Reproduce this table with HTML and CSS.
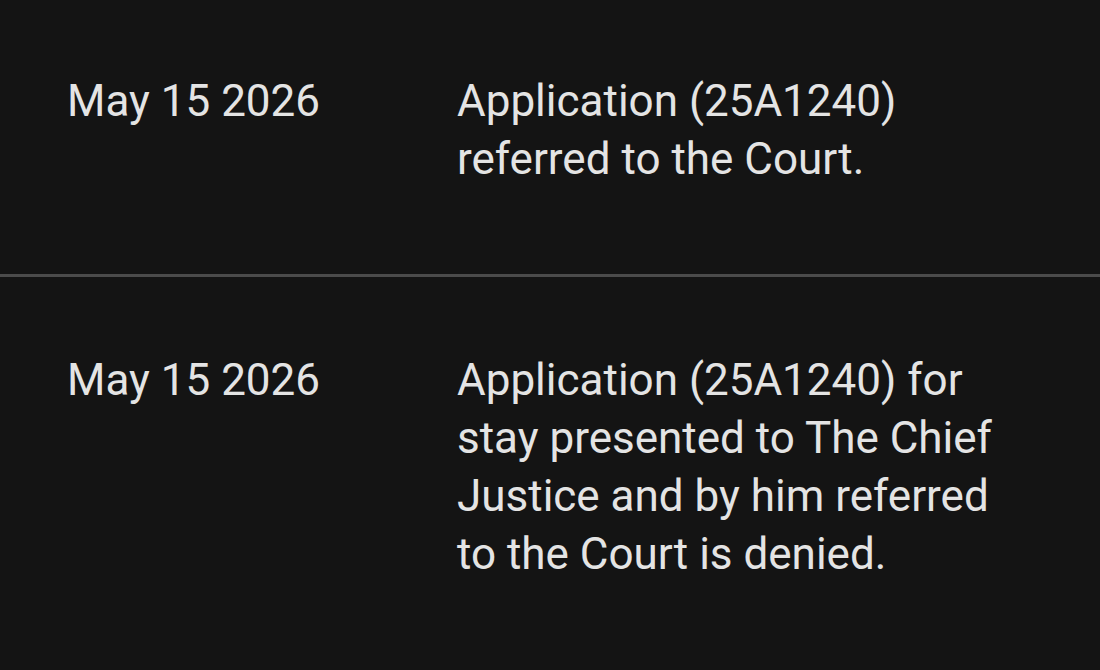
FILE: index.html
```html
<!DOCTYPE html>
<html lang="en">
<head>
    <meta charset="UTF-8">
    <meta name="viewport" content="width=device-width, initial-scale=1.0">
    <title>Docket</title>
    <link rel="stylesheet" href="styles.css">
</head>
<body>
    <div class="docket">
        <div class="entry">
            <div class="entry-date">May 15 2026</div>
            <div class="entry-text">Application (25A1240)<br>referred to the Court.</div>
        </div>
        <div class="entry">
            <div class="entry-date">May 15 2026</div>
            <div class="entry-text">Application (25A1240) for stay presented to The Chief Justice and by him referred to the Court is denied.</div>
        </div>
    </div>
</body>
</html>
```

FILE: styles.css
```css
* {
    margin: 0;
    padding: 0;
    box-sizing: border-box;
}

body {
    background: #141414;
    color: #e4e4e4;
    font-family: Roboto, 'Noto Sans', sans-serif;
    font-size: 44px;
    line-height: 58px;
}

.docket {
    display: flex;
    flex-direction: column;
}

.entry {
    display: grid;
    grid-template-columns: 390px 560px;
    padding: 74px 0 88px 67px;
}

.entry:first-child {
    padding-top: 72px;
    padding-bottom: 86px;
}

.entry + .entry {
    border-top: 3px solid #4b4b4b;
}
```
